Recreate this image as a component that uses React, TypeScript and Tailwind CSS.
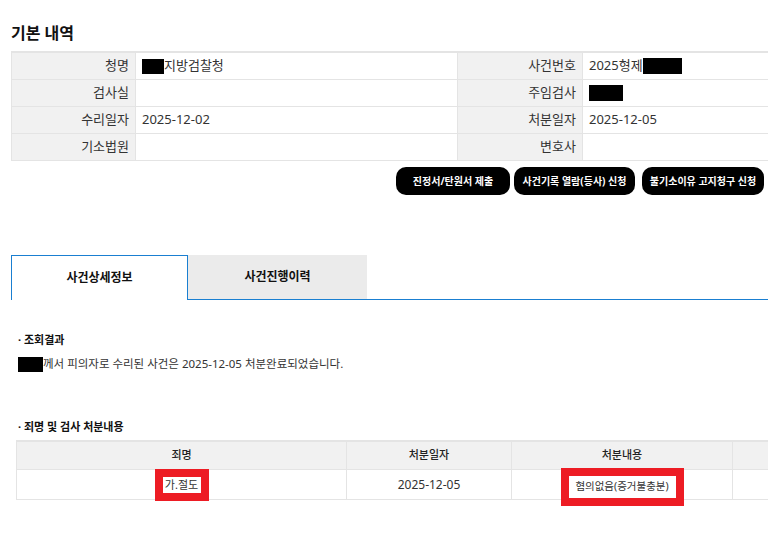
import React from 'react';

const font = { fontFamily: '"Noto Sans", "Noto Sans CJK KR", sans-serif' };

function Redact({ w, h = 16 }: { w: string; h?: number }) {
  return <span className={`inline-block bg-black align-middle ${w} ${h === 16 ? 'h-[16px]' : 'h-[15px]'}`} />;
}

function InfoRow({
  l1,
  v1,
  l2,
  v2,
}: {
  l1: string;
  v1?: React.ReactNode;
  l2: string;
  v2?: React.ReactNode;
}) {
  return (
    <div className="flex h-[27px] border-b border-[#e4e4e4] text-[13px] text-[#333]">
      <div className="w-[124px] shrink-0 bg-[#f1f1f1] border-r border-[#e4e4e4] flex items-center justify-end pr-[6px]">
        {l1}
      </div>
      <div className="w-[321px] shrink-0 flex items-center pl-[6px]">{v1}</div>
      <div className="w-[126px] shrink-0 bg-[#f1f1f1] border-x border-[#e4e4e4] flex items-center justify-end pr-[6px]">
        {l2}
      </div>
      <div className="flex-1 flex items-center pl-[6px]">{v2}</div>
    </div>
  );
}

function ActionButton({ label, width }: { label: string; width: string }) {
  return (
    <button
      className={`${width} h-[28px] rounded-[10px] bg-black text-white text-[10px] font-bold flex items-center justify-center whitespace-nowrap`}
    >
      {label}
    </button>
  );
}

export default function App() {
  return (
    <div className="w-[768px] h-[547px] overflow-hidden bg-white text-[#222]" style={font}>
      <div className="pl-[11px] w-[900px]">
        <h2 className="pt-[22px] text-[16px] leading-[22px] font-bold text-[#111]">기본 내역</h2>

        <div className="mt-[7px] border-t-2 border-[#e4e4e4] border-l">
          <InfoRow
            l1="청명"
            v1={
              <span className="flex items-center">
                <Redact w="w-[22px]" h={17} />
                지방검찰청
              </span>
            }
            l2="사건번호"
            v2={
              <span className="flex items-center">
                2025형제
                <Redact w="w-[39px]" />
              </span>
            }
          />
          <InfoRow l1="검사실" l2="주임검사" v2={<Redact w="w-[34px]" />} />
          <InfoRow l1="수리일자" v1="2025-12-02" l2="처분일자" v2="2025-12-05" />
          <InfoRow l1="기소법원" l2="변호사" />
        </div>

        <div className="w-[753px] flex justify-end mt-[6px]">
          <ActionButton label="진정서/탄원서 제출" width="w-[114px]" />
          <div className="w-[4px]" />
          <ActionButton label="사건기록 열람(등사) 신청" width="w-[121px]" />
          <div className="w-[7px]" />
          <ActionButton label="불기소이유 고지청구 신청" width="w-[122px]" />
        </div>

        <div className="mt-[60px] flex h-[45px]">
          <div className="w-[177px] border-t-[1.5px] border-x-[1.5px] border-[#1a7fd1] bg-white flex items-center justify-center text-[12px] font-bold text-[#111]">
            사건상세정보
          </div>
          <div className="w-[179px] bg-[#ebebeb] border-b-[1.5px] border-[#1a7fd1] flex items-center justify-center text-[12px] font-bold text-[#111]">
            사건진행이력
          </div>
          <div className="flex-1 border-b-[1.5px] border-[#1a7fd1]" />
        </div>

        <div className="pl-[7px]">
          <p className="mt-[32px] text-[11px] leading-[16px] font-bold text-[#111]">· 조회결과</p>
          <p className="mt-[7px] text-[11.5px] leading-[18px] text-[#333] flex items-center">
            <Redact w="w-[25px]" h={15} />
            께서 피의자로 수리된 사건은 2025-12-05 처분완료되었습니다.
          </p>

          <p className="mt-[46px] text-[11px] leading-[16px] font-bold text-[#111]">· 죄명 및 검사 처분내용</p>
        </div>

        <div className="mt-[5px] ml-[5px] border-t-2 border-l border-[#e4e4e4] text-[11px] text-[#333]">
          <div className="flex h-[28px] bg-[#f1f1f1] border-b border-[#e4e4e4] font-medium text-[#222]">
            <div className="w-[330px] border-r border-[#e4e4e4] flex items-center justify-center">죄명</div>
            <div className="w-[165px] border-r border-[#e4e4e4] flex items-center justify-center">처분일자</div>
            <div className="w-[221px] border-r border-[#e4e4e4] flex items-center justify-center">처분내용</div>
            <div className="flex-1" />
          </div>
          <div className="flex h-[30px] border-b border-[#e4e4e4]">
            <div className="w-[330px] border-r border-[#e4e4e4] flex items-center justify-center">
              <span className="h-[32px] w-[54px] border-[8px] border-[#ed1c24] bg-white flex items-center justify-center leading-none">
                가.절도
              </span>
            </div>
            <div className="w-[165px] border-r border-[#e4e4e4] flex items-center justify-center text-[12px]">
              2025-12-05
            </div>
            <div className="w-[221px] border-r border-[#e4e4e4] flex items-center justify-center">
              <span className="h-[38px] mt-[4px] w-[123px] border-[8px] border-[#ed1c24] bg-white flex items-center justify-center leading-none text-[10.5px]">
                혐의없음(증거불충분)
              </span>
            </div>
            <div className="flex-1" />
          </div>
        </div>
      </div>
    </div>
  );
}
